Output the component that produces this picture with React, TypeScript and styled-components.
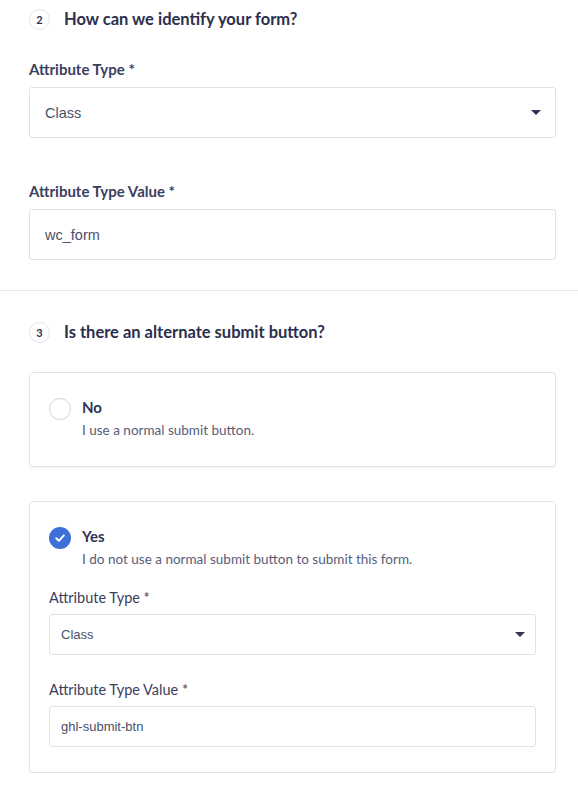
import styled, { createGlobalStyle } from "styled-components"

const GlobalStyle = createGlobalStyle`
    body {
        margin: 0;
        background: #ffffff;
        font-family: Lato, "Noto Sans", sans-serif;
        color: #2e3452;
    }
`

const Page = styled.div`
    width: 578px;
`

const Section = styled.section<{ divided?: boolean }>`
    padding: ${props => props.divided ? '30px 22px 0 29px' : '8px 22px 30px 29px'};
    border-bottom: ${props => props.divided ? 'none' : '1px solid #e3e7ee'};
`

const StepHeader = styled.div`
    display: flex;
    align-items: center;
    gap: 14px;
    height: 22px;
`

const StepNumber = styled.span`
    width: 19px;
    height: 19px;
    border: 1px solid #dfe4ec;
    border-radius: 50%;
    display: flex;
    align-items: center;
    justify-content: center;
    font-size: 11px;
    font-weight: 700;
    color: #2e3452;
`

const StepTitle = styled.h2`
    margin: 0;
    font-size: 16.5px;
    font-weight: 700;
    color: #2a2f4d;
`

const Field = styled.div<{ compact?: boolean }>`
    display: flex;
    flex-direction: column;
    gap: ${props => props.compact ? '7px' : '9px'};
`

const Label = styled.label<{ compact?: boolean }>`
    font-size: ${props => props.compact ? '14.5px' : '15px'};
    font-weight: ${props => props.compact ? 400 : 700};
    color: #3b405e;
    line-height: 18px;
`

const Box = styled.div<{ compact?: boolean }>`
    height: ${props => props.compact ? '39px' : '49px'};
    border: 1px solid #dde2ea;
    border-radius: 3px;
    display: flex;
    align-items: center;
    justify-content: space-between;
    padding: ${props => props.compact ? '0 11px' : '0 15px'};
    font-family: "Liberation Sans", Arial, sans-serif;
    font-size: ${props => props.compact ? '13px' : '14.5px'};
    color: #4b506b;
`

const Caret = styled.span`
    width: 0;
    height: 0;
    border-left: 5px solid transparent;
    border-right: 5px solid transparent;
    border-top: 5px solid #2e3452;
    margin-right: -1px;
`

const Fields = styled.div<{ compact?: boolean }>`
    display: flex;
    flex-direction: column;
    gap: ${props => props.compact ? '26px' : '44px'};
    margin-top: ${props => props.compact ? '22px' : '30px'};
`

const Cards = styled.div`
    display: flex;
    flex-direction: column;
    gap: 34px;
    margin-top: 29px;
`

const Card = styled.div<{ expanded?: boolean }>`
    border: 1px solid #dfe3eb;
    border-radius: 4px;
    box-shadow: 0 1px 2px rgba(30, 40, 70, 0.06);
    padding: ${props => props.expanded ? '25px 19px 25px' : '25px 19px 28px'};
`

const Choice = styled.div`
    display: flex;
    align-items: flex-start;
    gap: 11px;
`

const Radio = styled.span<{ checked?: boolean }>`
    width: 22px;
    height: 22px;
    border-radius: 50%;
    box-sizing: border-box;
    border: ${props => props.checked ? 'none' : '1px solid #cfd5df'};
    background: ${props => props.checked ? '#3d6fd8' : '#ffffff'};
    display: flex;
    align-items: center;
    justify-content: center;
    flex-shrink: 0;
`

const ChoiceText = styled.div`
    display: flex;
    flex-direction: column;
    gap: 6px;
`

const ChoiceTitle = styled.span`
    font-size: 15px;
    font-weight: 700;
    color: #2e3452;
    line-height: 18px;
`

const ChoiceHint = styled.span`
    font-size: 13.5px;
    color: #585d77;
    line-height: 16px;
`

const Check = () => (
    <svg width="12" height="12" viewBox="0 0 12 12" fill="none">
        <path d="M2.2 6.3 L4.9 8.8 L9.8 3.4" stroke="#ffffff" strokeWidth="1.9" strokeLinecap="round" strokeLinejoin="round" />
    </svg>
)

const App = () => {
    return <>
        <GlobalStyle />
        <Page>
            <Section>
                <StepHeader>
                    <StepNumber>2</StepNumber>
                    <StepTitle>How can we identify your form?</StepTitle>
                </StepHeader>
                <Fields>
                    <Field>
                        <Label>Attribute Type *</Label>
                        <Box>Class<Caret /></Box>
                    </Field>
                    <Field>
                        <Label>Attribute Type Value *</Label>
                        <Box>wc_form</Box>
                    </Field>
                </Fields>
            </Section>
            <Section divided>
                <StepHeader>
                    <StepNumber>3</StepNumber>
                    <StepTitle>Is there an alternate submit button?</StepTitle>
                </StepHeader>
                <Cards>
                    <Card>
                        <Choice>
                            <Radio />
                            <ChoiceText>
                                <ChoiceTitle>No</ChoiceTitle>
                                <ChoiceHint>I use a normal submit button.</ChoiceHint>
                            </ChoiceText>
                        </Choice>
                    </Card>
                    <Card expanded>
                        <Choice>
                            <Radio checked><Check /></Radio>
                            <ChoiceText>
                                <ChoiceTitle>Yes</ChoiceTitle>
                                <ChoiceHint>I do not use a normal submit button to submit this form.</ChoiceHint>
                            </ChoiceText>
                        </Choice>
                        <Fields compact>
                            <Field compact>
                                <Label compact>Attribute Type *</Label>
                                <Box compact>Class<Caret /></Box>
                            </Field>
                            <Field compact>
                                <Label compact>Attribute Type Value *</Label>
                                <Box compact>ghl-submit-btn</Box>
                            </Field>
                        </Fields>
                    </Card>
                </Cards>
            </Section>
        </Page>
    </>
}

export default App
